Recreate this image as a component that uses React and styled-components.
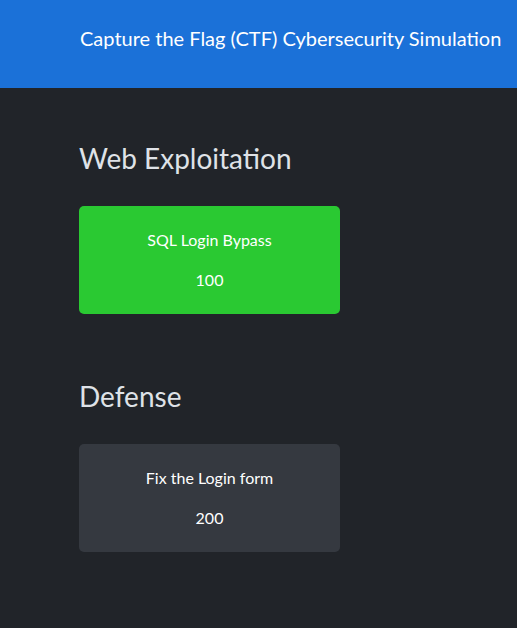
import React from 'react';
import styled, { createGlobalStyle } from 'styled-components';

const GlobalStyle = createGlobalStyle`
  html, body {
    margin: 0;
    padding: 0;
    background: #212429;
    font-family: Lato, "Open Sans", sans-serif;
  }
`;

const Page = styled.div`
  min-height: 628px;
  background: #212429;
`;

const Header = styled.header`
  height: 88px;
  box-sizing: border-box;
  background: #1b71d8;
  padding: 26px 0 0 80px;
`;

const Title = styled.h1`
  margin: 0;
  font-size: 20px;
  font-weight: 400;
  line-height: 24px;
  color: #ffffff;
  white-space: nowrap;
`;

const Main = styled.main`
  padding: 53px 0 0 79px;
  display: flex;
  flex-direction: column;
  gap: 65px;
`;

const Section = styled.section`
  display: flex;
  flex-direction: column;
  gap: 31px;
`;

const SectionTitle = styled.h2`
  margin: 0;
  font-size: 28px;
  font-weight: 400;
  line-height: 34px;
  color: #dfe2e7;
`;

const Card = styled.div`
  width: 261px;
  height: 108px;
  box-sizing: border-box;
  border-radius: 5px;
  background: ${(p) => (p.solved ? '#2ac932' : '#353940')};
  padding: 22px 16px 0;
  display: flex;
  flex-direction: column;
  align-items: center;
  gap: 16px;
  color: #ffffff;
`;

const CardText = styled.p`
  margin: 0;
  font-size: 16px;
  line-height: 24px;
`;

const categories = [
  { name: 'Web Exploitation', challenges: [{ title: 'SQL Login Bypass', points: 100, solved: true }] },
  { name: 'Defense', challenges: [{ title: 'Fix the Login form', points: 200, solved: false }] },
];

export default function App() {
  return (
    <Page>
      <GlobalStyle />
      <Header>
        <Title>Capture the Flag (CTF) Cybersecurity Simulation</Title>
      </Header>
      <Main>
        {categories.map((cat) => (
          <Section key={cat.name}>
            <SectionTitle>{cat.name}</SectionTitle>
            {cat.challenges.map((ch) => (
              <Card key={ch.title} solved={ch.solved}>
                <CardText>{ch.title}</CardText>
                <CardText>{ch.points}</CardText>
              </Card>
            ))}
          </Section>
        ))}
      </Main>
    </Page>
  );
}
